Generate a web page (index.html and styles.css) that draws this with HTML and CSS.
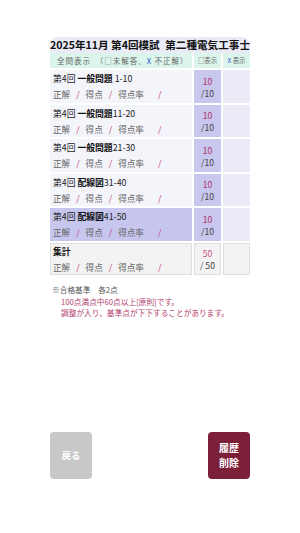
FILE: index.html
```html
<!DOCTYPE html>
<html lang="ja">
<head>
<meta charset="utf-8">
<link rel="stylesheet" href="styles.css">
</head>
<body>
<div class="page">
  <div class="sheet">
    <div class="title">2025年11月 第4回模試<span class="gap"></span>第二種電気工事士</div>
    <div class="grid">
      <div class="hd hd-main"><span>全問表示　（□未解答、<span class="x">X</span> 不正解）</span></div>
      <div class="hd hd-sub"><span>□表示</span></div>
      <div class="hd hd-sub"><span><span class="x">X</span> 表示</span></div>

      <div class="cell main"><div class="name">第4回 <b>一般問題</b> 1-10</div><div class="stats"><span class="lb">正解</span><span class="sl">/</span><span class="lb">得点</span><span class="sl">/</span><span class="lb rate">得点率</span><span class="sl">/</span></div></div>
      <div class="cell score"><span class="pt">10</span><span class="of">/10</span></div>
      <div class="cell extra"></div>

      <div class="cell main"><div class="name">第4回 <b>一般問題</b>11-20</div><div class="stats"><span class="lb">正解</span><span class="sl">/</span><span class="lb">得点</span><span class="sl">/</span><span class="lb rate">得点率</span><span class="sl">/</span></div></div>
      <div class="cell score"><span class="pt">10</span><span class="of">/10</span></div>
      <div class="cell extra"></div>

      <div class="cell main"><div class="name">第4回 <b>一般問題</b>21-30</div><div class="stats"><span class="lb">正解</span><span class="sl">/</span><span class="lb">得点</span><span class="sl">/</span><span class="lb rate">得点率</span><span class="sl">/</span></div></div>
      <div class="cell score"><span class="pt">10</span><span class="of">/10</span></div>
      <div class="cell extra"></div>

      <div class="cell main"><div class="name">第4回 <b>配線図</b>31-40</div><div class="stats"><span class="lb">正解</span><span class="sl">/</span><span class="lb">得点</span><span class="sl">/</span><span class="lb rate">得点率</span><span class="sl">/</span></div></div>
      <div class="cell score"><span class="pt">10</span><span class="of">/10</span></div>
      <div class="cell extra"></div>

      <div class="cell main active"><div class="name">第4回 <b>配線図</b>41-50</div><div class="stats"><span class="lb">正解</span><span class="sl">/</span><span class="lb">得点</span><span class="sl">/</span><span class="lb rate">得点率</span><span class="sl">/</span></div></div>
      <div class="cell score"><span class="pt">10</span><span class="of">/10</span></div>
      <div class="cell extra"></div>

      <div class="cell main total"><div class="name"><b>集計</b></div><div class="stats"><span class="lb">正解</span><span class="sl">/</span><span class="lb">得点</span><span class="sl">/</span><span class="lb rate">得点率</span><span class="sl">/</span></div></div>
      <div class="cell score total"><span class="pt">50</span><span class="of">/ 50</span></div>
      <div class="cell extra total"></div>
    </div>
  </div>

  <div class="notes">
    <div class="note-head">※合格基準　各2点</div>
    <div class="note-red">100点満点中60点以上[原則]です。</div>
    <div class="note-red">調整が入り、基準点が下下することがあります。</div>
  </div>

  <div class="buttons">
    <div class="btn back">戻る</div>
    <div class="btn del">履歴<br>削除</div>
  </div>
</div>
</body>
</html>
```
FILE: styles.css
```css
html, body {
  margin: 0;
  padding: 0;
  background: #ffffff;
}
body {
  font-family: "Noto Sans CJK JP", "Noto Sans", sans-serif;
  color: #333;
}
.page {
  width: 300px;
  height: 533px;
  padding-top: 37px;
  box-sizing: border-box;
  display: flex;
  flex-direction: column;
  align-items: center;
}
.sheet {
  width: 200px;
}
.title {
  height: 16px;
  line-height: 16px;
  background: #ebebf8;
  border-radius: 8px 8px 0 0;
  font-size: 10.6px;
  font-weight: bold;
  color: #111;
  white-space: nowrap;
  text-align: center;
  display: flex;
  justify-content: center;
}
.gap {
  display: inline-block;
  width: 7px;
}
.grid {
  display: grid;
  grid-template-columns: 142px 27px 27px;
  grid-template-rows: 15px repeat(6, 32.5px);
  column-gap: 2px;
  row-gap: 2px;
}
.hd {
  background: #dcf5ec;
  color: #666;
  display: flex;
  align-items: center;
  white-space: nowrap;
}
.hd-main {
  font-size: 7.6px;
  letter-spacing: 0.9px;
  padding-left: 7px;
}
.hd-sub {
  font-size: 6.4px;
  justify-content: center;
}
.x {
  color: #2a5bd6;
}
.cell {
  box-sizing: border-box;
}
.main {
  background: #f4f4fb;
  padding: 2px 0 0 3px;
}
.main.active {
  background: #c6c6ee;
}
.name {
  font-size: 8.8px;
  line-height: 14px;
  color: #222;
  white-space: nowrap;
}
.name b {
  font-weight: bold;
  color: #111;
}
.stats {
  font-size: 8.6px;
  line-height: 14px;
  color: #666;
  white-space: nowrap;
  margin-top: 1px;
}
.lb {
  display: inline-block;
}
.rate {
  margin-right: 8px;
}
.sl {
  display: inline-block;
  color: #c0407a;
  margin: 0 6px 0 6px;
}
.score {
  background: #c8c8ee;
  display: flex;
  flex-direction: column;
  align-items: center;
  justify-content: center;
  font-size: 8.6px;
  line-height: 12px;
  padding-top: 1px;
}
.pt {
  color: #b0306a;
}
.of {
  color: #444;
}
.extra {
  background: #ebebf8;
}
.total {
  background: #f3f3f3;
  border: 1px solid #dedede;
}
.main.total {
  padding: 1px 0 0 2px;
}
.score.total .pt {
  color: #c8507e;
}
.notes {
  width: 200px;
  margin-top: 9px;
  font-size: 7.7px;
  line-height: 11.5px;
}
.note-head {
  color: #555;
  padding-left: 2px;
}
.note-red {
  color: #b3406f;
  padding-left: 11px;
}
.buttons {
  width: 200px;
  margin-top: 113px;
  display: flex;
  justify-content: space-between;
}
.btn {
  width: 42px;
  height: 47px;
  border-radius: 4px;
  color: #fff;
  display: flex;
  align-items: center;
  justify-content: center;
  text-align: center;
  font-weight: bold;
}
.back {
  background: #c8c8c8;
  font-size: 9.5px;
}
.del {
  background: #7c203a;
  font-size: 10px;
  line-height: 15px;
}
```
